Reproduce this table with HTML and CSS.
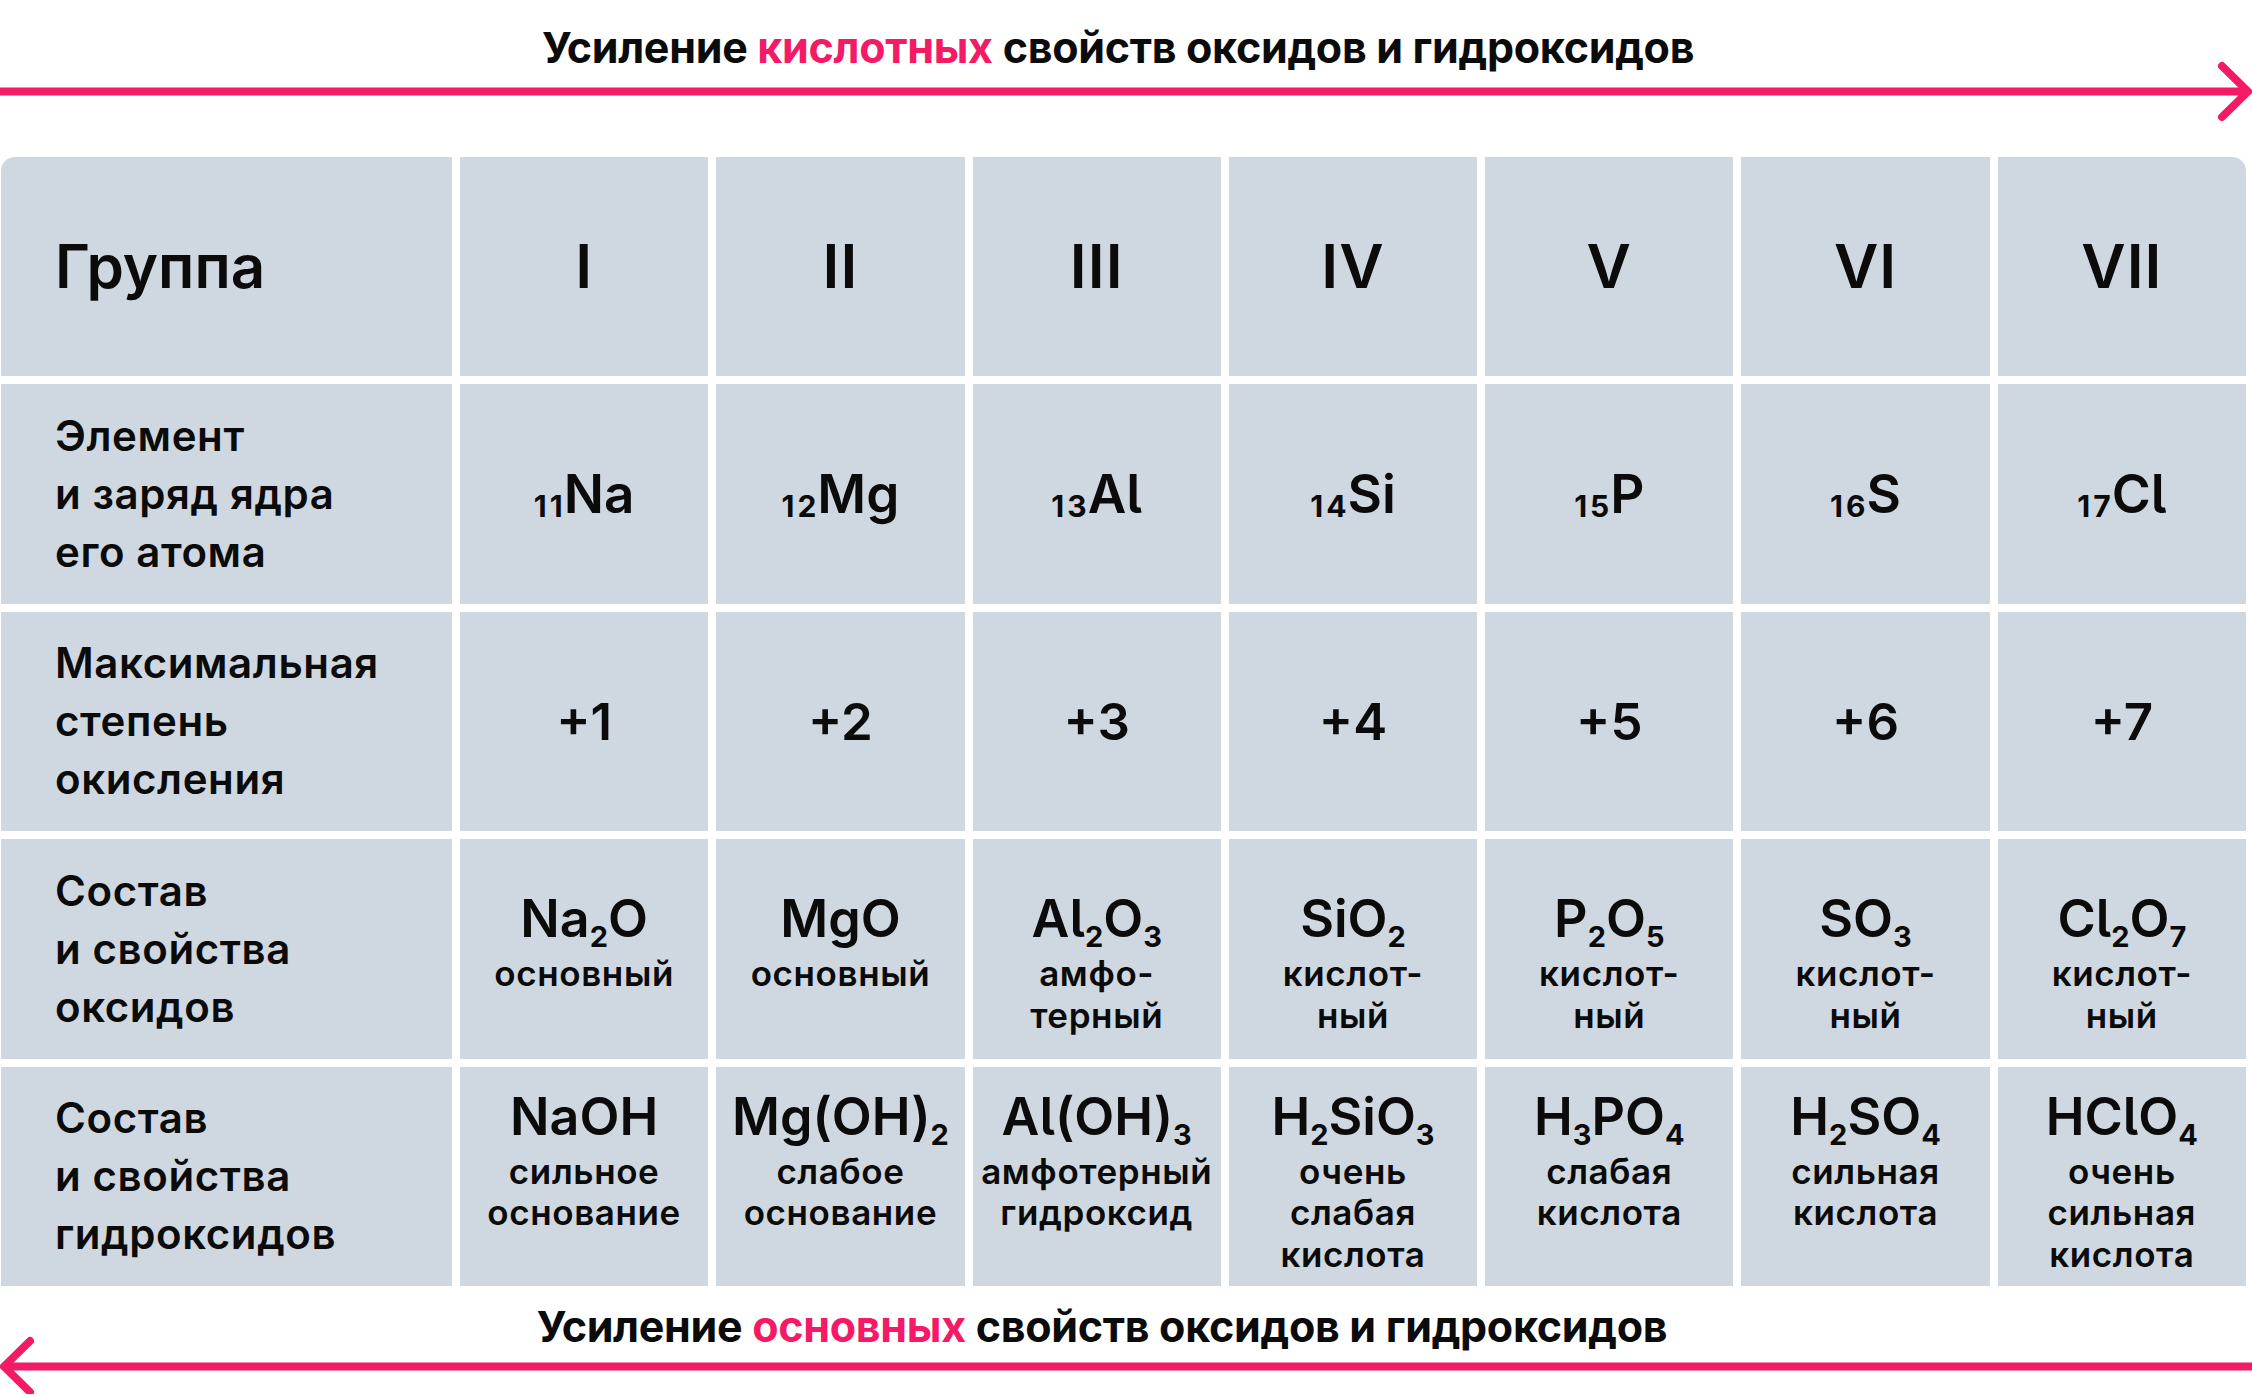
FILE: index.html
```html
<!DOCTYPE html>
<html lang="ru">
<head>
<meta charset="utf-8">
<title>Изменение свойств оксидов и гидроксидов</title>
<link rel="stylesheet" href="styles.css">
</head>
<body>
<div class="page">
  <div class="scale-title top">Усиление <span class="accent">кислотных</span> свойств оксидов и гидроксидов</div>
  <svg class="arrow arrow-right" width="2252" height="56" viewBox="0 0 2252 56">
    <line x1="0" y1="28.5" x2="2247" y2="28.5" stroke="#F41A66" stroke-width="8"/>
    <polyline points="2222,3 2248,28.5 2222,54" fill="none" stroke="#F41A66" stroke-width="8" stroke-linecap="round" stroke-linejoin="round"/>
  </svg>

  <div class="table">
    <div class="cell label head-label tl">Группа</div>
    <div class="cell head">I</div>
    <div class="cell head">II</div>
    <div class="cell head">III</div>
    <div class="cell head">IV</div>
    <div class="cell head">V</div>
    <div class="cell head">VI</div>
    <div class="cell head tr">VII</div>

    <div class="cell label">Элемент<br>и заряд ядра<br>его атома</div>
    <div class="cell elem"><span class="z">11</span>Na</div>
    <div class="cell elem"><span class="z">12</span>Mg</div>
    <div class="cell elem"><span class="z">13</span>Al</div>
    <div class="cell elem"><span class="z">14</span>Si</div>
    <div class="cell elem"><span class="z">15</span>P</div>
    <div class="cell elem"><span class="z">16</span>S</div>
    <div class="cell elem"><span class="z">17</span>Cl</div>

    <div class="cell label">Максимальная<br>степень<br>окисления</div>
    <div class="cell ox">+1</div>
    <div class="cell ox">+2</div>
    <div class="cell ox">+3</div>
    <div class="cell ox">+4</div>
    <div class="cell ox">+5</div>
    <div class="cell ox">+6</div>
    <div class="cell ox">+7</div>

    <div class="cell label">Состав<br>и свойства<br>оксидов</div>
    <div class="cell comp oxide"><div class="formula">Na<sub>2</sub>O</div><div class="desc">основный</div></div>
    <div class="cell comp oxide"><div class="formula">MgO</div><div class="desc">основный</div></div>
    <div class="cell comp oxide"><div class="formula">Al<sub>2</sub>O<sub>3</sub></div><div class="desc">амфо-<br>терный</div></div>
    <div class="cell comp oxide"><div class="formula">SiO<sub>2</sub></div><div class="desc">кислот-<br>ный</div></div>
    <div class="cell comp oxide"><div class="formula">P<sub>2</sub>O<sub>5</sub></div><div class="desc">кислот-<br>ный</div></div>
    <div class="cell comp oxide"><div class="formula">SO<sub>3</sub></div><div class="desc">кислот-<br>ный</div></div>
    <div class="cell comp oxide"><div class="formula">Cl<sub>2</sub>O<sub>7</sub></div><div class="desc">кислот-<br>ный</div></div>

    <div class="cell label">Состав<br>и свойства<br>гидроксидов</div>
    <div class="cell comp hydro"><div class="formula">NaOH</div><div class="desc">сильное<br>основание</div></div>
    <div class="cell comp hydro"><div class="formula">Mg(OH)<sub>2</sub></div><div class="desc">слабое<br>основание</div></div>
    <div class="cell comp hydro"><div class="formula">Al(OH)<sub>3</sub></div><div class="desc">амфотерный<br>гидроксид</div></div>
    <div class="cell comp hydro"><div class="formula">H<sub>2</sub>SiO<sub>3</sub></div><div class="desc">очень<br>слабая<br>кислота</div></div>
    <div class="cell comp hydro"><div class="formula">H<sub>3</sub>PO<sub>4</sub></div><div class="desc">слабая<br>кислота</div></div>
    <div class="cell comp hydro"><div class="formula">H<sub>2</sub>SO<sub>4</sub></div><div class="desc">сильная<br>кислота</div></div>
    <div class="cell comp hydro"><div class="formula">HClO<sub>4</sub></div><div class="desc">очень<br>сильная<br>кислота</div></div>
  </div>

  <div class="scale-title bottom">Усиление <span class="accent">основных</span> свойств оксидов и гидроксидов</div>
  <svg class="arrow arrow-left" width="2252" height="54" viewBox="0 0 2252 54">
    <line x1="5" y1="26.5" x2="2252" y2="26.5" stroke="#F41A66" stroke-width="8"/>
    <polyline points="30,1 4,26.5 30,52" fill="none" stroke="#F41A66" stroke-width="8" stroke-linecap="round" stroke-linejoin="round"/>
  </svg>
</div>
</body>
</html>
```
FILE: styles.css
```css
html, body {
  margin: 0;
  padding: 0;
  background: #ffffff;
}

body {
  width: 2252px;
  font-family: "Inter", "Noto Sans", "Liberation Sans", sans-serif;
  font-feature-settings: "cv05" 1;
  color: #0b0b0b;
}

.page {
  display: flex;
  flex-direction: column;
}

.scale-title {
  text-align: center;
  font-size: 43px;
  font-weight: 700;
  line-height: 44px;
  letter-spacing: -0.3px;
}

.scale-title.top {
  padding-top: 25px;
  padding-right: 16px;
}

.scale-title.bottom {
  padding-top: 17.5px;
  padding-right: 48px;
}

.accent {
  color: #F41A66;
}

.arrow {
  display: block;
  overflow: visible;
}

.arrow-right {
  margin-top: -6px;
}

.arrow-left {
  margin-top: -8px;
}

.table {
  margin-top: 37.5px;
  margin-left: 1px;
  width: 2245px;
  display: grid;
  grid-template-columns: 451px repeat(7, 1fr);
  grid-auto-rows: 219.5px;
  gap: 8px;
  background: #ffffff;
}

.cell {
  background: #CFD8E0;
  font-weight: 600;
}

.tl { border-top-left-radius: 14px; }
.tr { border-top-right-radius: 14px; }

.label {
  display: flex;
  align-items: center;
  padding-left: 54px;
  font-size: 42px;
  line-height: 58px;
  letter-spacing: 0.6px;
}

.head-label {
  font-size: 60px;
  line-height: 70px;
  letter-spacing: 0;
}

.head {
  display: flex;
  align-items: center;
  justify-content: center;
  font-size: 61px;
  letter-spacing: 1px;
}

.elem {
  display: flex;
  align-items: center;
  justify-content: center;
  font-size: 53px;
  line-height: 60px;
}

.z {
  font-size: 30px;
  font-weight: 700;
  line-height: 0;
  position: relative;
  top: 12px;
  margin-right: -2px;
  letter-spacing: 3px;
}

.ox {
  display: flex;
  align-items: center;
  justify-content: center;
  font-size: 51px;
}

.comp {
  display: flex;
  flex-direction: column;
  align-items: center;
  text-align: center;
}

.comp.oxide { padding-top: 48px; }
.comp.hydro { padding-top: 18px; }

.formula {
  font-size: 52px;
  line-height: 64px;
  white-space: nowrap;
}

.formula sub {
  font-size: 29px;
  font-weight: 700;
  line-height: 0;
  vertical-align: -10px;
}

.desc {
  margin-top: 2px;
  font-size: 35px;
  line-height: 41.5px;
  letter-spacing: 0.6px;
}
```
